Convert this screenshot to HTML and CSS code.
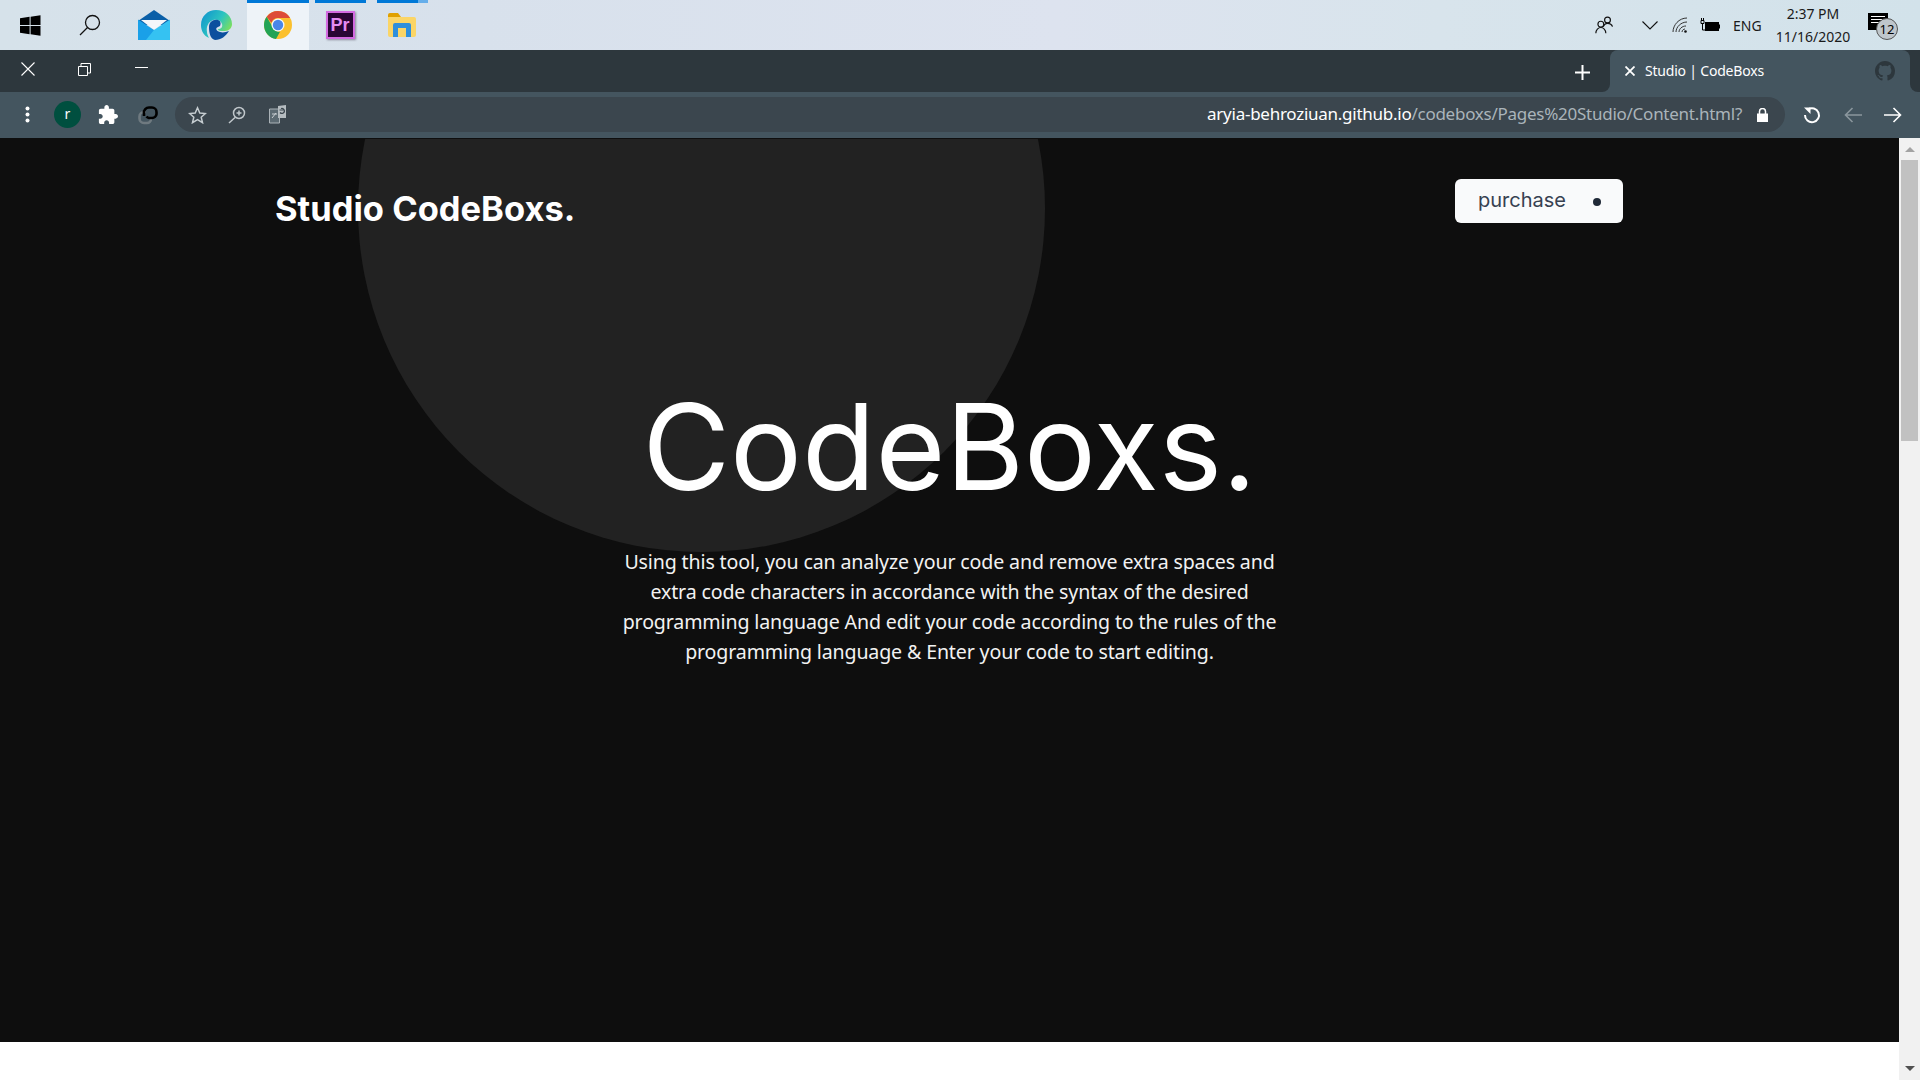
FILE: index.html
```html
<!DOCTYPE html>
<html lang="en">
<head>
<meta charset="utf-8">
<title>Studio | CodeBoxs</title>
<link rel="stylesheet" href="styles.css">
</head>
<body>
<header class="taskbar">
  <div class="task-apps">
    <div class="cell cell-first"><svg width="21" height="21" viewBox="0 0 21 21"><path fill="#000" d="M0 3.2 9.6 1.8V10H0zM10.6 1.7 20.5.3V10H10.600zM0 11h9.600v8.200L0 17.800zM10.600 11h9.900v9.700l-9.900-1.400z"/></svg></div>
    <div class="cell cell-search"><svg width="24" height="24" viewBox="0 0 24 24" fill="none" stroke="#111" stroke-width="1.300"><circle cx="14.500" cy="9.500" r="7"/><path d="M9.500 14.500 2 22"/></svg></div>
    <div class="cell"><svg width="32" height="30" viewBox="0 0 32 30"><path fill="#0a5fa8" d="M0 11 16 0l16 11v4H0z"/><path fill="#f4f6fa" d="M3 10h26L16 20z"/><path fill="#1aa0e8" d="M0 9.500 16 20v10H0z"/><path fill="#35c2f2" d="M32 9.500 16 20 8 30h24z"/></svg></div>
    <div class="cell"><svg width="31" height="30" viewBox="0 0 31 30"><defs><linearGradient id="eg" x1="0" y1="0" x2="1" y2="0.600"><stop offset="0" stop-color="#0c8fd0"/><stop offset=".6" stop-color="#2dc4c0"/><stop offset="1" stop-color="#7ee05a"/></linearGradient></defs><path fill="url(#eg)" d="M0 15C0 6 7 0 15 0c9 0 16 6 16 14 0 4-3 7-7 7h-4c-2 0-3-1-3-2 3 0 5-2 4-5-1-4-5-5-9-4-5 2-7 7-6 12 0 2 1 4 2 6C3 26 0 21 0 15z"/><path fill="#0c4f9e" d="M8 17c0-5 4-8 9-7 3 1 3 4 2 6l-2 1c-3 1-2 4 2 5 3 1 6 0 9-1-3 5-8 9-14 9C9 29 8 22 8 17z"/></svg></div>
    <div class="cell cell-active"><svg width="28" height="28" viewBox="0 0 28 28"><circle cx="14" cy="14" r="14" fill="#fbc02d"/><path fill="#dd4b39" d="M14 0a14 14 0 0 1 12.100 7H14a7 7 0 0 0-6.600 4.700L2.700 5.800A14 14 0 0 1 14 0z"/><path fill="#22a355" d="M2.700 5.800 8 15c1 2.800 3.500 6 8 5.800L12 28C5 27 0 21 0 14c0-3 1-6 2.700-8.200z"/><circle cx="14" cy="14" r="6.500" fill="#f4f7fb"/><circle cx="14" cy="14" r="5.200" fill="#4a86e8"/></svg></div>
    <div class="cell cell-run"><div class="pr-icon"><span>Pr</span></div></div>
    <div class="cell cell-run cell-run-multi"><svg width="28" height="24" viewBox="0 0 28 24"><path fill="#e0a000" d="M0 2a2 2 0 0 1 2-2h8l3 4H0z"/><path fill="#fbd566" d="M0 4h26a2 2 0 0 1 2 2v16a2 2 0 0 1-2 2H2a2 2 0 0 1-2-2z"/><path fill="#2f8fdc" d="M5 24V12a2 2 0 0 1 2-2h14a2 2 0 0 1 2 2v12h-5v-9h-8v9z"/></svg></div>
  </div>
  <div class="tray">
    <svg class="tray-people" width="20" height="20" viewBox="0 0 24 22" fill="none" stroke="#111" stroke-width="1.400"><circle cx="15" cy="5" r="3.500"/><path d="M10 13c1-3 3-4 5-4s5 1 6 4"/><circle cx="7" cy="10" r="3.500"/><path d="M1 21c0-4 3-7 6-7s6 3 6 7"/></svg>
    <svg class="tray-chevron" width="16" height="9" viewBox="0 0 16 9" fill="none" stroke="#111" stroke-width="1.100"><path d="M.5.5 8 8 15.500.5"/></svg>
    <svg class="tray-wifi" width="16" height="16" viewBox="0 0 16 16" fill="none" stroke="#333" stroke-width="1"><path d="M1 15C1 8 7 1 15 1M4 15c0-5 5-10 11-10M7 15c0-3 3-6 7-6M10 15c0-2 2-3 3-3"/><circle cx="13.500" cy="14.500" r="1.300" fill="#111" stroke="none"/></svg>
    <svg class="tray-battery" width="20" height="14" viewBox="0 0 20 14"><path fill="#000" d="M5 4h14v9H5z"/><path fill="#000" d="M19 6.500h1v4h-1z"/><path fill="none" stroke="#000" d="M1 2.500v3h3v-3zM2.500 5.500V12H5M1.500 0v2.500M3.500 0v2.500"/></svg>
    <span class="tray-lang">ENG</span>
    <div class="tray-clock"><span>2:37 PM</span><span>11/16/2020</span></div>
    <div class="tray-notify"><span class="notify-box"><i></i><i></i><i></i></span><span class="notify-count">12</span></div>
  </div>
</header>

<nav class="tabstrip">
  <div class="tabs-empty">
    <div class="win-controls">
      <svg class="win-close" width="14" height="14" viewBox="0 0 14 14" stroke="#fff" stroke-width="1.100"><path d="M.5.500l13 13M13.500.5l-13 13"/></svg>
      <svg class="win-restore" width="13" height="13" viewBox="0 0 13 13" fill="none" stroke="#fff"><path d="M.5 3.500h9v9h-9zM3 3V.5h9.500V10H10"/></svg>
      <svg class="win-min" width="13" height="2" viewBox="0 0 13 2" stroke="#fff"><path d="M0 .5h13"/></svg>
    </div>
    <svg class="tab-new" width="15" height="15" viewBox="0 0 15 15" stroke="#fff" stroke-width="2"><path d="M7.500 0v15M0 7.500h15"/></svg>
  </div>
  <div class="tab">
    <svg class="tab-x" width="10" height="10" viewBox="0 0 10 10" stroke="#fff" stroke-width="1.800"><path d="M.5.500l9 9M9.500.5l-9 9"/></svg>
    <span class="tab-title">Studio | CodeBoxs</span>
    <svg class="tab-fav" width="20" height="20" viewBox="0 0 16 16"><path fill="#2d373d" d="M8 0C3.580 0 0 3.580 0 8c0 3.540 2.290 6.530 5.470 7.590.4.070.55-.17.55-.38 0-.19-.01-.82-.01-1.490-2.010.37-2.530-.49-2.690-.94-.09-.23-.48-.94-.82-1.130-.28-.15-.68-.52-.01-.53.63-.01 1.080.58 1.230.82.720 1.210 1.870.87 2.330.66.070-.52.280-.87.510-1.070-1.780-.2-3.640-.89-3.640-3.950 0-.87.310-1.590.820-2.150-.08-.2-.36-1.020.080-2.120 0 0 .67-.21 2.200.82.640-.18 1.320-.27 2-.27.680 0 1.360.09 2 .27 1.530-1.040 2.200-.82 2.200-.82.440 1.100.160 1.920.080 2.120.510.560.820 1.270.820 2.150 0 3.070-1.870 3.750-3.650 3.950.290.250.540.730.540 1.480 0 1.070-.01 1.930-.01 2.200 0 .21.150.46.550.38A8.013 8.013 0 0016 8c0-4.420-3.580-8-8-8z"/></svg>
  </div>
  <div class="tabs-tail"></div>
</nav>

<div class="toolbar">
  <div class="tool-left">
    <svg class="tool-kebab" width="5" height="17" viewBox="0 0 5 17" fill="#fff"><circle cx="2.500" cy="2.500" r="2"/><circle cx="2.500" cy="8.500" r="2"/><circle cx="2.500" cy="14.500" r="2"/></svg>
    <span class="avatar">r</span>
    <svg class="tool-puzzle" width="20" height="20" viewBox="1 1 22 22"><path fill="#fff" d="M20.500 11H19V7c0-1.100-.9-2-2-2h-4V3.500C13 2.120 11.880 1 10.500 1S8 2.120 8 3.500V5H4c-1.100 0-1.990.9-1.990 2v3.800H3.500c1.490 0 2.700 1.210 2.700 2.700s-1.210 2.700-2.700 2.700H2V20c0 1.100.9 2 2 2h3.800v-1.500c0-1.490 1.210-2.700 2.700-2.700 1.490 0 2.700 1.210 2.700 2.700V22H17c1.100 0 2-.9 2-2v-4h1.500c1.380 0 2.500-1.120 2.500-2.500S21.880 11 20.500 11z"/></svg>
    <svg class="tool-link" width="20" height="20" viewBox="0 0 20 20" fill="none" stroke-width="2.600"><path stroke="#6f7a80" d="M8 7H6a4.500 4.500 0 0 0-4.500 4.500v2A4.500 4.500 0 0 0 6 18h3a4 4 0 0 0 4-4"/><path stroke="#000" d="M6 11V8a5 5 0 0 1 5-5.500h3A4.500 4.500 0 0 1 18.500 7v2a4.500 4.500 0 0 1-4.500 4H11a4 4 0 0 1-2.500-1.500"/></svg>
  </div>
  <div class="omnibox">
    <svg class="omni-star" width="19" height="18" viewBox="0 0 19 18" fill="none" stroke="#c6cdd1" stroke-width="1.500"><path d="M9.500 1.800 11.800 7l5.600.5-4.200 3.700 1.300 5.500-5-3-5 3 1.300-5.500L1.600 7.500 7.200 7z"/></svg>
    <svg class="omni-zoom" width="18" height="18" viewBox="0 0 18 18" fill="none" stroke="#c0c7cb" stroke-width="1.500"><circle cx="11" cy="7" r="5.500"/><path d="M7 11.500 1 17M11 4.500v5M8.500 7h5"/></svg>
    <svg class="omni-translate" width="18" height="19" viewBox="0 0 18 19"><path fill="#5c6a72" stroke="#aab2b7" d="M.5 4h10v14H.5z"/><path fill="#b5bcc0" d="M9 1l8-1v13H9z"/><path fill="none" stroke="#3b464e" stroke-width="1.200" d="M10.500 5h4M12 3.500a2.500 2.500 0 1 1-1 4"/><path stroke="#c9cfd3" fill="none" d="M3 13l4-5M3 9h5"/></svg>
    <span class="url"><b>aryia-behroziuan.github.io</b>/codeboxs/Pages%20Studio/Content.html?</span>
    <svg class="omni-lock" width="11" height="14" viewBox="0 0 11 14"><path fill="#fff" d="M0 5.500h11V14H0z"/><path fill="none" stroke="#fff" stroke-width="1.500" d="M2.500 6V3.500a3 3 0 0 1 6 0V6"/></svg>
  </div>
  <div class="tool-right">
    <svg width="18" height="18" viewBox="0 0 18 18" fill="none" stroke="#fff" stroke-width="2"><path d="M5 3.500A7 7 0 1 1 2 9"/><path fill="#fff" stroke="none" d="M1 1.500h6.500V8z"/></svg>
    <svg width="18" height="16" viewBox="0 0 18 16" fill="none" stroke="#8a969d" stroke-width="1.600"><path d="M18 8H2M8.500 1 1.500 8l7 7"/></svg>
    <svg width="18" height="16" viewBox="0 0 18 16" fill="none" stroke="#fff" stroke-width="1.600"><path d="M0 8h16M9.500 1l7 7-7 7"/></svg>
  </div>
</div>

<div class="viewport">
  <div class="page">
    <main class="stage">
      <div class="orb"></div>
      <div class="site-nav">
        <a class="brand">Studio CodeBoxs.</a>
        <button class="buy"><span>purchase</span><i class="buy-dot"></i></button>
      </div>
      <section class="hero">
        <h1 class="hero-title">CodeBoxs.</h1>
        <p class="hero-text">Using this tool, you can analyze your code and remove extra spaces and<br>extra code characters in accordance with the syntax of the desired<br>programming language And edit your code according to the rules of the<br>programming language &amp; Enter your code to start editing.</p>
      </section>
    </main>
    <div class="below"></div>
  </div>
  <aside class="scrollbar">
    <span class="arrow-up"></span>
    <div class="scroll-track"><div class="thumb"></div></div>
    <span class="arrow-down"></span>
  </aside>
</div>
</body>
</html>
```
FILE: styles.css
```css
* { box-sizing: border-box; }
html, body { margin: 0; height: 100%; }
body {
  display: flex;
  flex-direction: column;
  height: 1080px;
  overflow: hidden;
  background: #fff;
  font-family: "Noto Sans", sans-serif;
}
svg { display: block; flex: none; }

/* taskbar */
.taskbar {
  height: 50px;
  flex: none;
  display: flex;
  justify-content: space-between;
  background: linear-gradient(90deg, #d6e2ea 0%, #d8e1ec 25%, #dde3ef 55%, #d8e4ec 75%, #d2e2ea 100%);
}
.task-apps { display: flex; }
.cell {
  position: relative;
  width: 62px;
  display: flex;
  align-items: center;
  justify-content: center;
}
.cell-first { width: 61px; }
.cell-search { padding-right: 4px; }
.cell-active { background: #eef3f8; }
.cell-active::before, .cell-run::before {
  content: "";
  position: absolute;
  top: 0;
  height: 3px;
  background: #0078d7;
}
.cell-active::before { left: 0; right: 0; }
.cell-run::before { left: 6px; right: 5px; }
.cell-run-multi::before { background: linear-gradient(90deg, #0078d7 80%, #66aeea 80%); }
.pr-icon {
  width: 29px;
  height: 28px;
  background: #2a0634;
  border: 2px solid #d36be0;
  box-shadow: 1px 1px 2px #8c8c9c;
  display: flex;
  align-items: center;
  justify-content: center;
  color: #e58cf2;
  font-family: "Liberation Sans", sans-serif;
  font-size: 18px;
  font-weight: 700;
}
.tray { display: flex; align-items: center; color: #1a1a1a; }
.tray-people { margin-right: 27px; }
.tray-chevron { margin-right: 14px; }
.tray-wifi { margin-right: 12px; }
.tray-battery { margin-right: 13px; }
.tray-lang { font-size: 14px; width: 30px; margin-right: 12px; }
.tray-clock {
  display: flex;
  flex-direction: column;
  align-items: center;
  gap: 4px;
  width: 76px;
  font-size: 14px;
  line-height: 19px;
  margin-right: 15px;
}
.tray-notify { position: relative; width: 32px; height: 32px; margin-right: 22px; }
.notify-box {
  position: absolute;
  left: 2px;
  top: 4px;
  width: 20px;
  height: 17px;
  background: #000;
  display: flex;
  flex-direction: column;
  gap: 2px;
  padding: 3px;
}
.notify-box i { height: 1px; background: #fff; }
.notify-count {
  position: absolute;
  left: 10px;
  top: 9px;
  width: 22px;
  height: 22px;
  border-radius: 50%;
  border: 1px solid #555;
  background: #bfc6cb;
  font-size: 13px;
  line-height: 20px;
  text-align: center;
  color: #000;
}

/* tab strip */
.tabstrip {
  height: 42px;
  flex: none;
  display: flex;
  background: linear-gradient(#2d373d 50%, #44555f 50%);
}
.tabs-empty {
  flex: 1;
  display: flex;
  align-items: center;
  justify-content: space-between;
  background: #2d373d;
  border-bottom-right-radius: 8px;
  padding-right: 20px;
}
.win-controls { display: flex; align-items: center; padding-left: 21px; margin-top: -4px; }
.win-restore { margin-left: 43px; }
.win-min { margin-left: 44px; margin-top: -3px; }
.tab-new { margin-top: 2px; }
.tab {
  width: 300px;
  display: flex;
  align-items: center;
  background: #44555f;
  border-radius: 8px 8px 0 0;
  padding: 0 15px 0 15px;
  color: #fff;
}
.tab-x { margin-right: 10px; }
.tab-title { flex: 1; font-size: 14px; letter-spacing: -0.2px; margin-top: -2px; }
.tabs-tail { width: 10px; background: #2d373d; border-bottom-left-radius: 8px; }

/* toolbar */
.toolbar {
  height: 46px;
  flex: none;
  display: flex;
  align-items: center;
  background: #44555f;
  padding: 0 18px 1px 0;
}
.tool-left { width: 175px; display: flex; align-items: center; padding-left: 25px; }
.avatar {
  width: 27px;
  height: 27px;
  border-radius: 50%;
  background: #004f3f;
  color: #fff;
  font-size: 14px;
  line-height: 26px;
  text-align: center;
  margin-left: 24px;
}
.tool-puzzle { margin-left: 17px; }
.tool-link { margin-left: 20px; }
.omnibox {
  width: 1610px;
  height: 35px;
  display: flex;
  align-items: center;
  background: #3b464e;
  border-radius: 18px;
  padding: 0 17px 0 13px;
  color: #aab4ba;
  font-size: 17px;
}
.omni-zoom { margin-left: 21px; }
.omni-translate { margin-left: 23px; }
.url { margin: -2px 15px 0 auto; letter-spacing: -0.26px; white-space: nowrap; }
.url b { font-weight: 400; color: #fff; }
.tool-right { display: flex; align-items: center; flex: 1; justify-content: space-between; padding-left: 18px; }

/* page */
.viewport { flex: 1; display: flex; min-height: 0; }
.page { flex: 1; display: flex; flex-direction: column; border-top: 1px solid #0e0e0e; }
.stage {
  position: relative;
  height: 903px;
  overflow: hidden;
  background: #0e0e0e;
  color: #fff;
}
.below { flex: 1; background: #fff; }
.orb {
  position: absolute;
  left: 358px;
  top: -274px;
  width: 687px;
  height: 687px;
  border-radius: 50%;
  background: #222;
}
.site-nav {
  position: relative;
  display: flex;
  justify-content: space-between;
  align-items: flex-start;
  padding: 40px 276px 0 275px;
}
.brand {
  font-family: Inter, sans-serif;
  font-size: 34.500px;
  font-weight: 700;
  line-height: 40px;
  margin-top: 10px;
}
.buy {
  width: 168px;
  height: 44px;
  display: flex;
  align-items: center;
  justify-content: space-between;
  padding: 0 22px 3px 23px;
  background: #f9fafb;
  border: 0;
  border-radius: 6px;
  color: #374151;
  font-family: Inter, sans-serif;
  font-size: 20px;
}
.buy-dot { width: 8px; height: 8px; border-radius: 50%; background: #1f2937; margin-top: 4px; }
.hero {
  position: relative;
  display: flex;
  flex-direction: column;
  align-items: center;
  margin-top: 145px;
}
.hero-title {
  margin: 0;
  font-family: Inter, sans-serif;
  font-size: 120px;
  font-weight: 400;
  line-height: 145px;
}
.hero-text {
  margin: 28px 0 0;
  font-size: 19.600px;
  letter-spacing: -0.14px;
  line-height: 30px;
  text-align: center;
  color: #f2f2f2;
}

/* scrollbar */
.scrollbar {
  width: 21px;
  flex: none;
  display: flex;
  flex-direction: column;
  align-items: center;
  background: #f1f1f1;
  padding: 9px 0;
}
.arrow-up, .arrow-down {
  width: 0;
  height: 0;
  border-left: 5px solid transparent;
  border-right: 5px solid transparent;
}
.arrow-up { border-bottom: 5px solid #a3a3a3; }
.arrow-down { border-top: 5px solid #505050; }
.scroll-track { flex: 1; width: 17px; padding-top: 8px; }
.thumb { height: 281px; background: #c1c1c1; }
```
